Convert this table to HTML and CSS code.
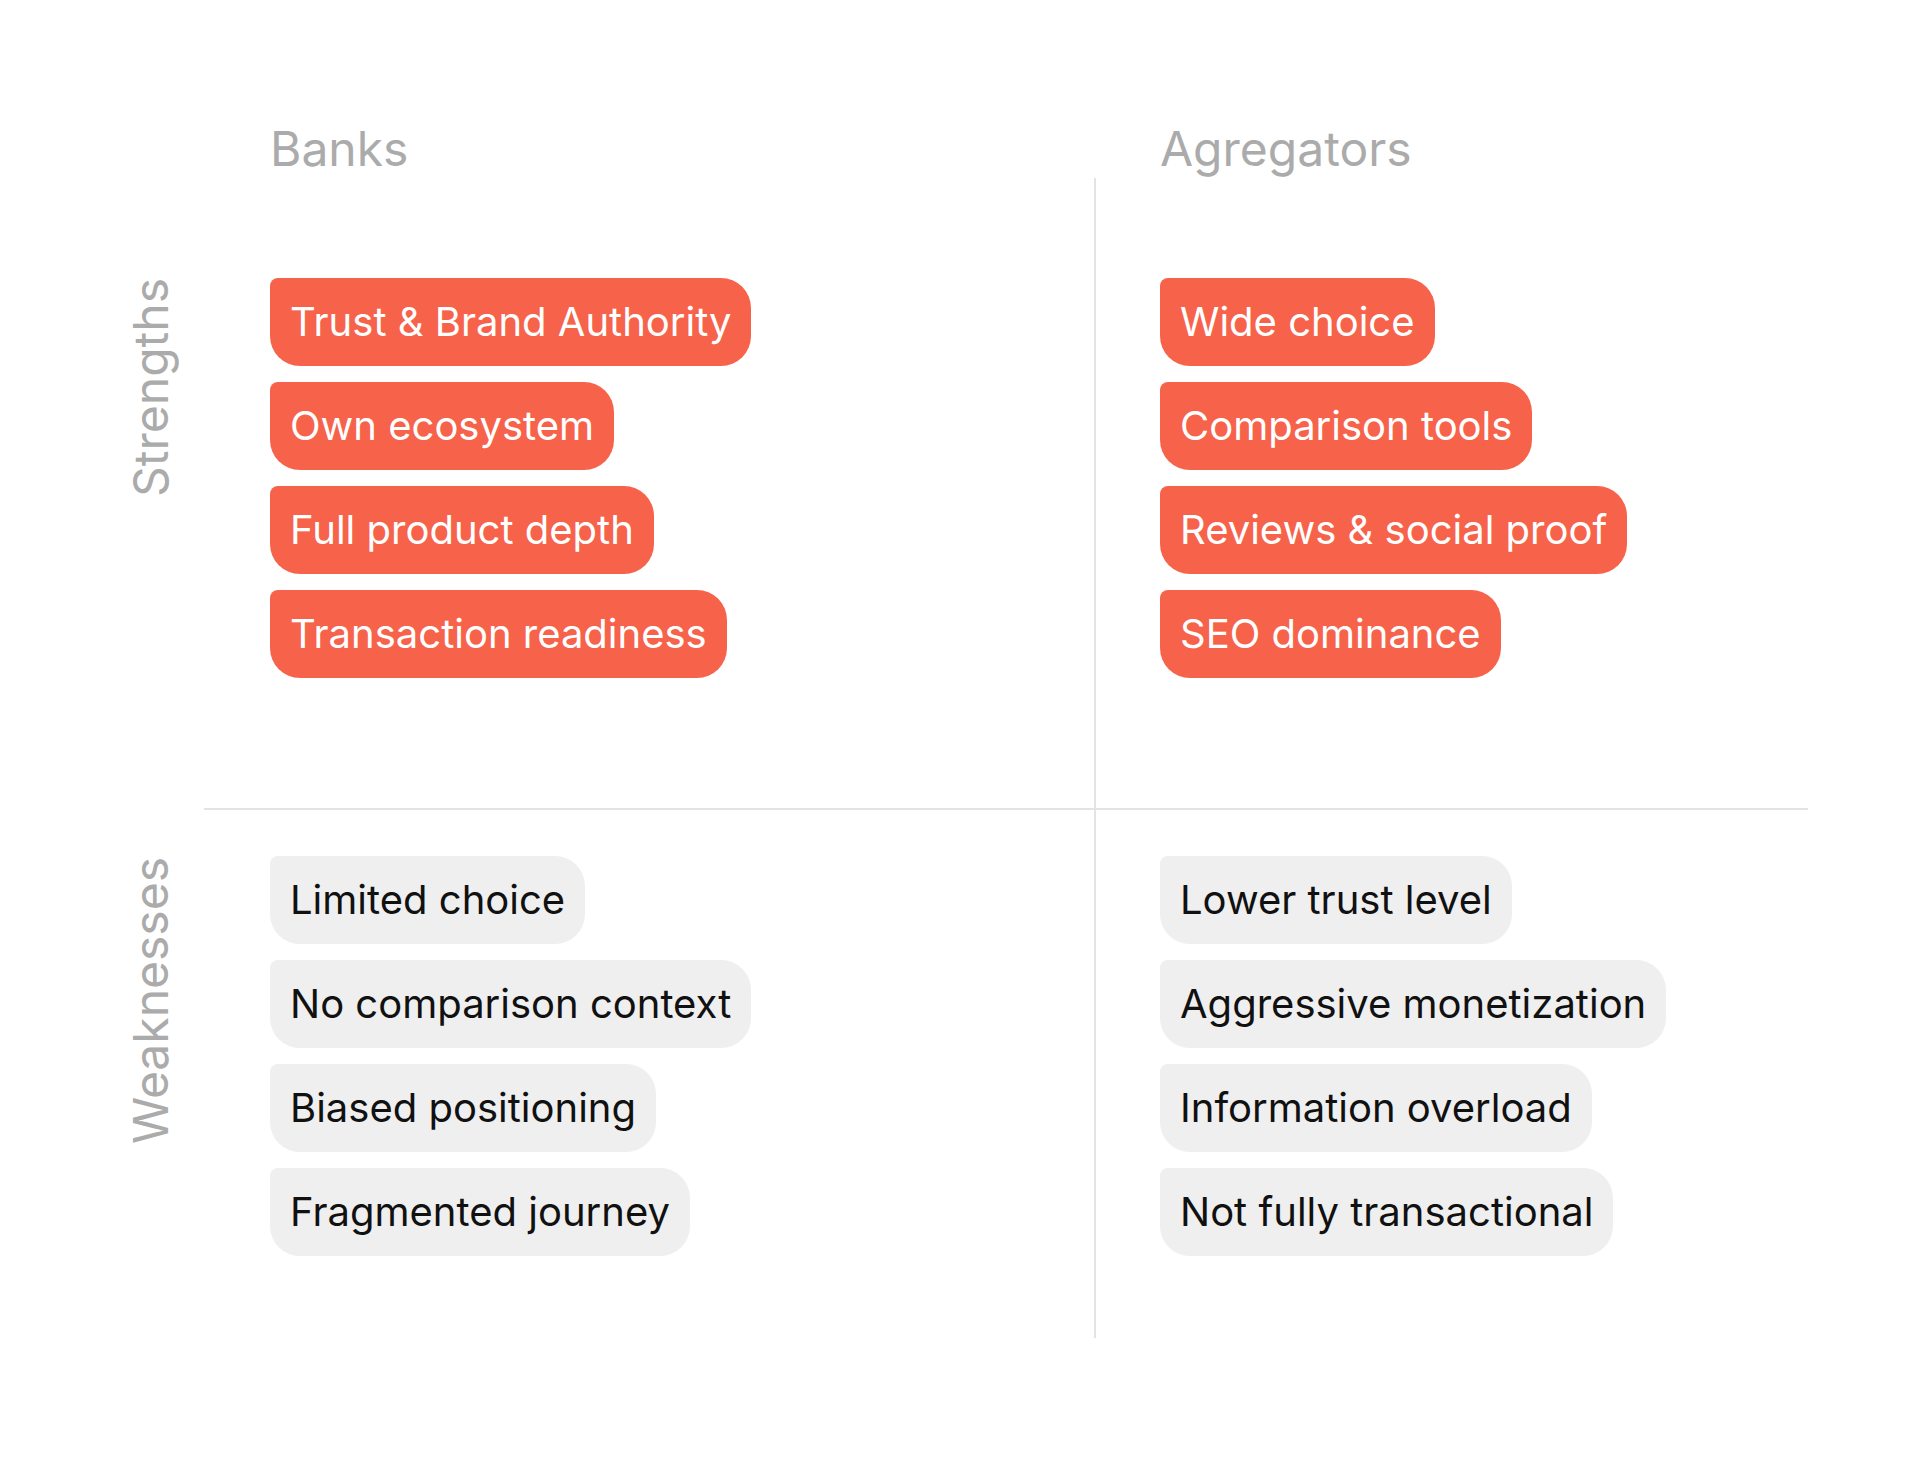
FILE: index.html
```html
<!DOCTYPE html>
<html lang="en">
<head>
<meta charset="utf-8">
<title>Banks vs Agregators</title>
<link rel="stylesheet" href="styles.css">
</head>
<body>
<main class="board">
  <div class="heads">
    <div class="corner"></div>
    <h2 class="head head-left">Banks</h2>
    <h2 class="head head-right">Agregators</h2>
  </div>
  <div class="matrix">
    <div class="label-cell row-strengths"><span class="side-label">Strengths</span></div>
    <div class="cell row-strengths col-left">
      <span class="pill pill-strong">Trust &amp; Brand Authority</span>
      <span class="pill pill-strong">Own ecosystem</span>
      <span class="pill pill-strong">Full product depth</span>
      <span class="pill pill-strong">Transaction readiness</span>
    </div>
    <div class="cell row-strengths col-right">
      <span class="pill pill-strong">Wide choice</span>
      <span class="pill pill-strong">Comparison tools</span>
      <span class="pill pill-strong">Reviews &amp; social proof</span>
      <span class="pill pill-strong">SEO dominance</span>
    </div>

    <div class="label-cell row-weak"><span class="side-label">Weaknesses</span></div>
    <div class="cell row-weak col-left">
      <span class="pill pill-weak">Limited choice</span>
      <span class="pill pill-weak">No comparison context</span>
      <span class="pill pill-weak">Biased positioning</span>
      <span class="pill pill-weak">Fragmented journey</span>
    </div>
    <div class="cell row-weak col-right">
      <span class="pill pill-weak">Lower trust level</span>
      <span class="pill pill-weak">Aggressive monetization</span>
      <span class="pill pill-weak">Information overload</span>
      <span class="pill pill-weak">Not fully transactional</span>
    </div>
  </div>
</main>
</body>
</html>
```

FILE: styles.css
```css
* {
  box-sizing: border-box;
}

html, body {
  margin: 0;
  padding: 0;
  background: #ffffff;
}

body {
  font-family: Inter, "Noto Sans", "Liberation Sans", sans-serif;
  width: 1928px;
  height: 1460px;
  overflow: hidden;
}

.board {
  padding-top: 120px;
}

.heads,
.matrix {
  display: grid;
  grid-template-columns: 204px 890px 714px;
}

.head {
  margin: 0;
  font-size: 48px;
  line-height: 58px;
  font-weight: 400;
  color: #ababab;
}

.head-left {
  padding-left: 66px;
}

.head-right {
  padding-left: 66px;
}

.cell {
  display: flex;
  flex-direction: column;
  align-items: flex-start;
  gap: 16px;
  padding-left: 66px;
}

.col-right {
  border-left: 2px solid #e3e3e3;
  padding-left: 64px;
}

.row-strengths {
  padding-top: 100px;
  padding-bottom: 130px;
}

.row-weak {
  padding-top: 46px;
  padding-bottom: 82px;
}

.cell.row-weak {
  border-top: 2px solid #e3e3e3;
}

.label-cell {
  display: flex;
  align-items: flex-start;
  padding-left: 122px;
}

.label-cell.row-weak {
  padding-top: 49px;
}

.side-label {
  writing-mode: vertical-rl;
  transform: rotate(180deg);
  font-size: 48px;
  line-height: 58px;
  color: #ababab;
  white-space: nowrap;
}

.pill {
  display: inline-block;
  font-size: 40px;
  line-height: 48px;
  padding: 20px 20px;
  border-radius: 8px 30px 30px 30px;
  white-space: nowrap;
}

.pill-strong {
  background: #f7624b;
  color: #ffffff;
}

.pill-weak {
  background: #efefef;
  color: #111111;
}
```
